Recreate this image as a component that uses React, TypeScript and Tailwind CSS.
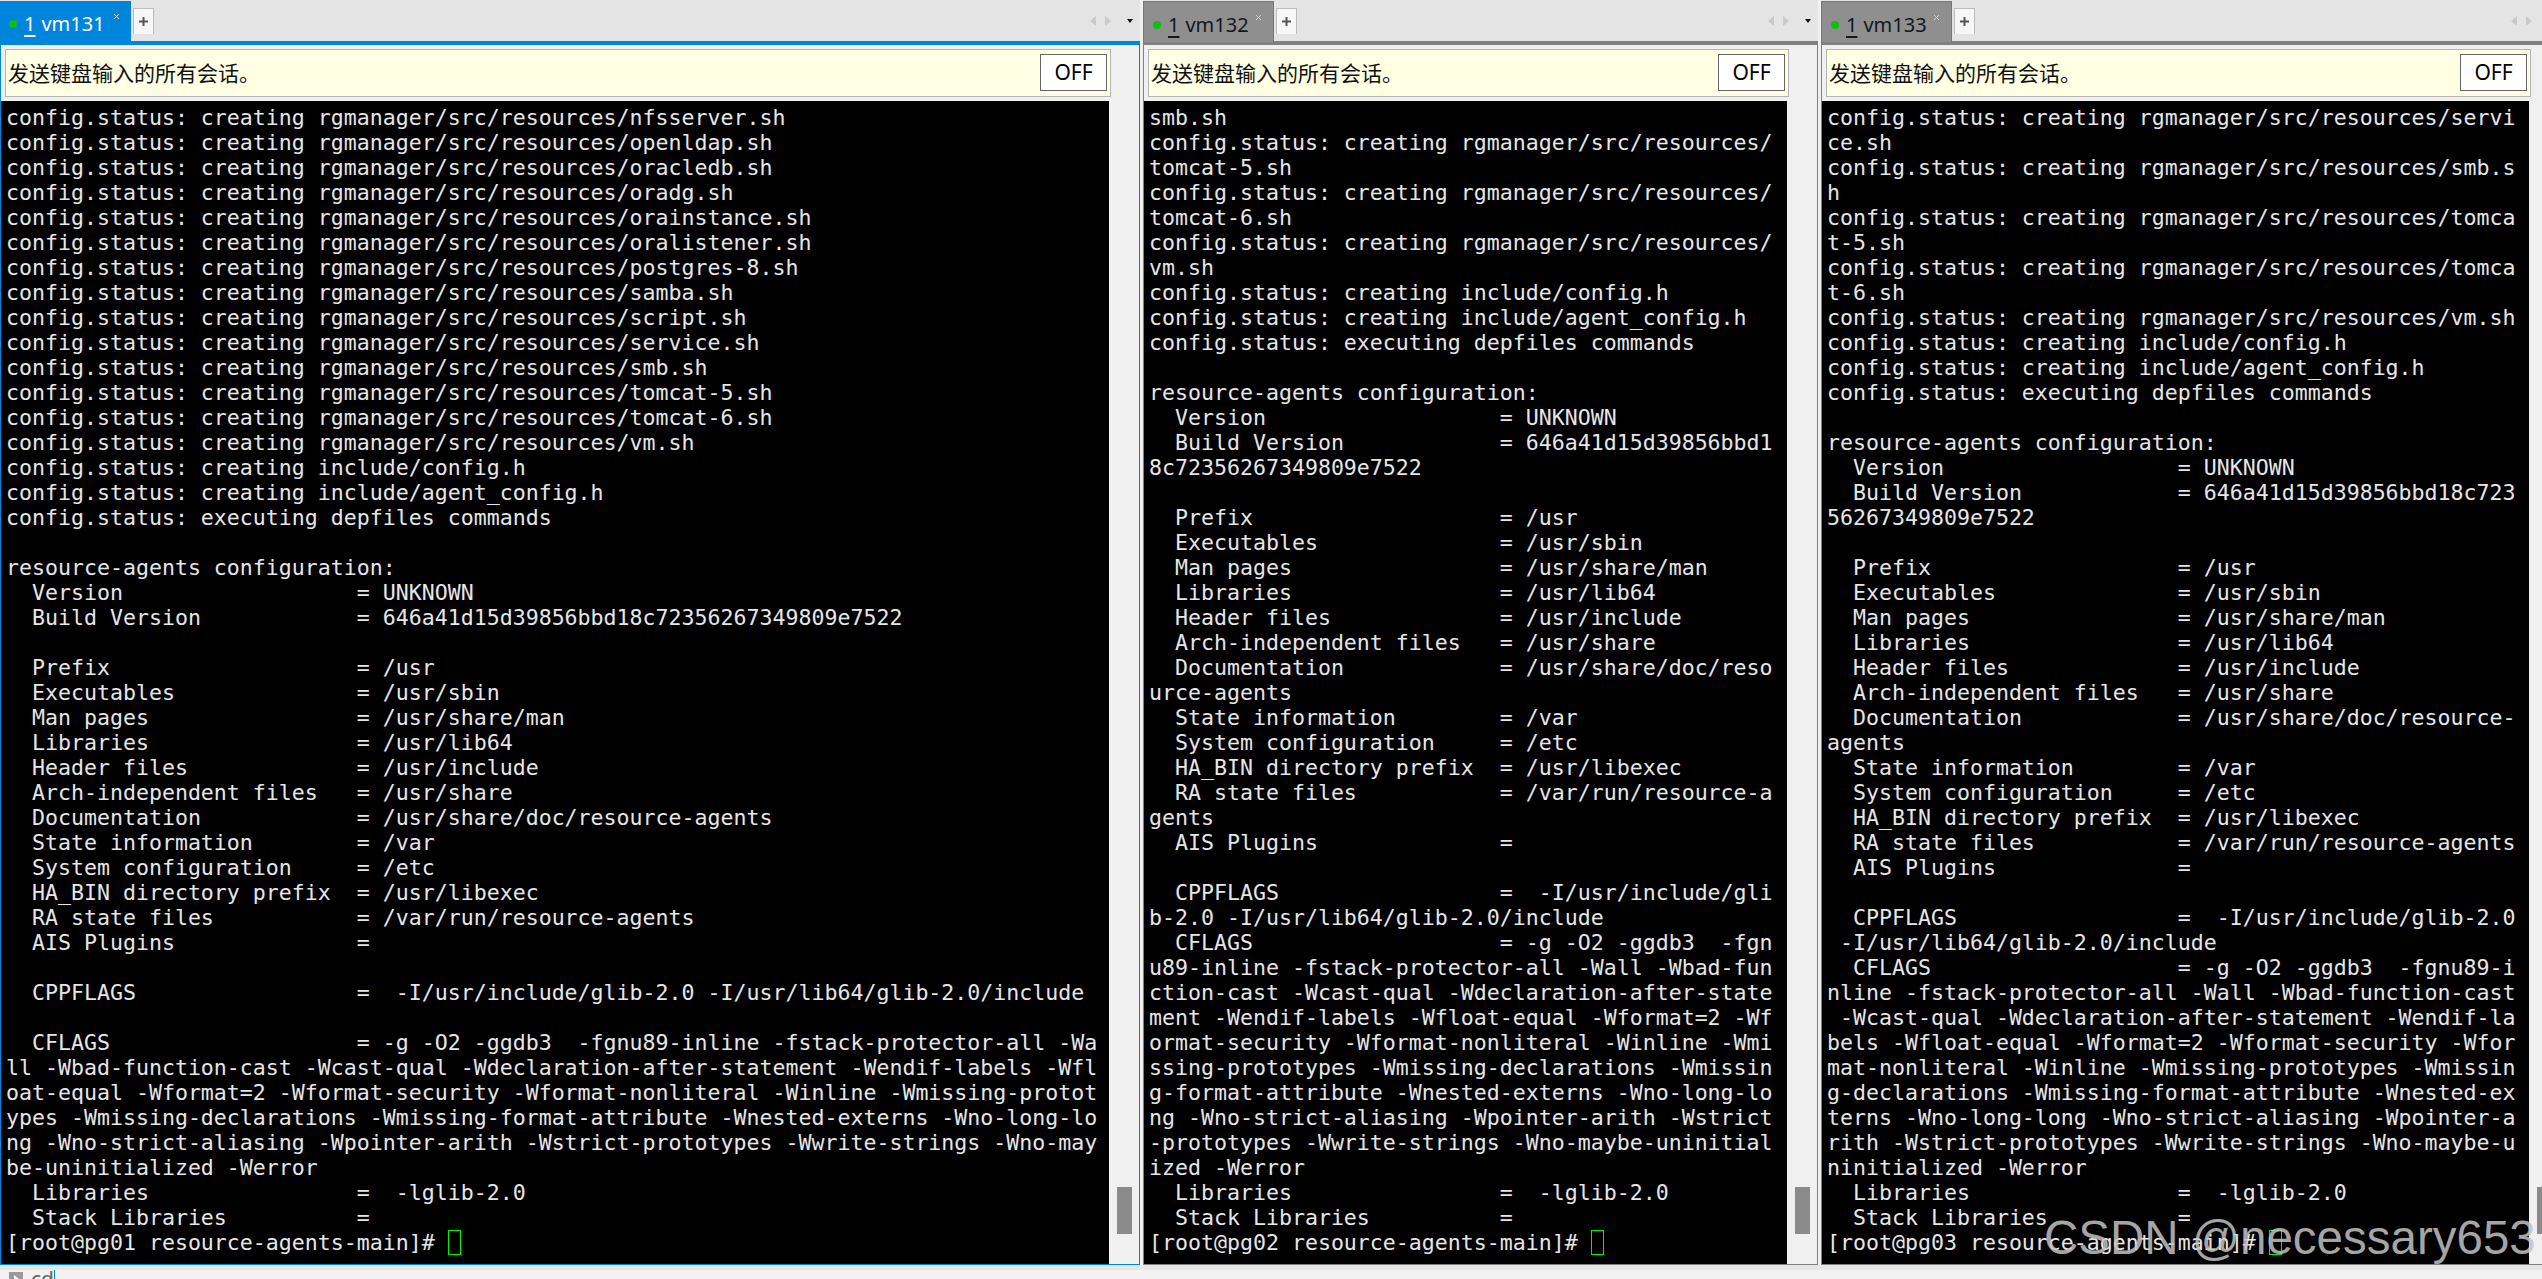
const res = (f: string) => `config.status: creating rgmanager/src/resources/${f}`
const kv = (k: string, v: string) => `  ${k}`.padEnd(27) + `= ${v}`

const CFLAGS =
  '-g -O2 -ggdb3  -fgnu89-inline -fstack-protector-all -Wall -Wbad-function-cast -Wcast-qual ' +
  '-Wdeclaration-after-statement -Wendif-labels -Wfloat-equal -Wformat=2 -Wformat-security ' +
  '-Wformat-nonliteral -Winline -Wmissing-prototypes -Wmissing-declarations ' +
  '-Wmissing-format-attribute -Wnested-externs -Wno-long-long -Wno-strict-aliasing ' +
  '-Wpointer-arith -Wstrict-prototypes -Wwrite-strings -Wno-maybe-uninitialized -Werror'

const LOG = [
  res('nfsserver.sh'), res('openldap.sh'), res('oracledb.sh'), res('oradg.sh'),
  res('orainstance.sh'), res('oralistener.sh'), res('postgres-8.sh'), res('samba.sh'),
  res('script.sh'), res('service.sh'), res('smb.sh'), res('tomcat-5.sh'),
  res('tomcat-6.sh'), res('vm.sh'),
  'config.status: creating include/config.h',
  'config.status: creating include/agent_config.h',
  'config.status: executing depfiles commands',
  '',
  'resource-agents configuration:',
  kv('Version', 'UNKNOWN'),
  kv('Build Version', '646a41d15d39856bbd18c72356267349809e7522'),
  '',
  kv('Prefix', '/usr'),
  kv('Executables', '/usr/sbin'),
  kv('Man pages', '/usr/share/man'),
  kv('Libraries', '/usr/lib64'),
  kv('Header files', '/usr/include'),
  kv('Arch-independent files', '/usr/share'),
  kv('Documentation', '/usr/share/doc/resource-agents'),
  kv('State information', '/var'),
  kv('System configuration', '/etc'),
  kv('HA_BIN directory prefix', '/usr/libexec'),
  kv('RA state files', '/var/run/resource-agents'),
  kv('AIS Plugins', ''),
  '',
  // trailing spaces are what push the blank row in the 84 column pane
  kv('CPPFLAGS', ' -I/usr/include/glib-2.0 -I/usr/lib64/glib-2.0/include  '),
  kv('CFLAGS', CFLAGS),
  kv('Libraries', ' -lglib-2.0'),
  kv('Stack Libraries', ''),
]

// hard wrap like the terminal does, then keep what fits on screen
function rows(cols: number) {
  const out: string[] = []
  for (const line of LOG) {
    if (!line) out.push('')
    for (let i = 0; i < line.length; i += cols) out.push(line.slice(i, i + cols))
  }
  return out.slice(-45)
}

function Arrow({ dir, color }: { dir: 'l' | 'r'; color: string }) {
  return (
    <svg width="6" height="10" viewBox="0 0 6 10" className="flex-none">
      <path d={dir === 'l' ? 'M6 0V10L0 5Z' : 'M0 0V10L6 5Z'} fill={color} />
    </svg>
  )
}

function Tab({ num, name, active }: { num: string; name: string; active: boolean }) {
  return (
    <div
      className={clsx(
        'relative flex h-[41px] w-[131px] flex-none items-center pl-[9px] pt-[5px] text-[20px] leading-none',
        active ? 'bg-[#0085dc] text-white' : 'border border-b-0 border-[#777] bg-[#8f8f8f] text-[#101820]',
      )}
    >
      <span className="mr-[7px] h-[8px] w-[8px] flex-none rounded-full bg-[#0cc00c]" />
      <span className="underline underline-offset-[4px]">{num}</span>
      <span className="ml-[6px]">{name}</span>
      <svg width="7" height="7" viewBox="0 0 7 7" className="absolute right-[11px] top-[12px]">
        <path d="M1 1L6 6M6 1L1 6" stroke={active ? '#cfe6f7' : '#d0d0d0'} strokeWidth="1" />
      </svg>
    </div>
  )
}

function Pane(props: {
  name: string
  active?: boolean
  host: string
  cols: number
  termW: string
  noticeW: string
  trackW: string
}) {
  const { name, active = false, host, cols, termW, noticeW, trackW } = props
  return (
    <div className="flex h-[1265px] flex-none flex-col">
      <div className="flex h-[41px] flex-none items-start bg-[#e4e4e4]">
        <div className="pt-px">
          <Tab num="1" name={name} active={active} />
        </div>
        <div className="ml-[2px] mt-[8px] flex h-[26px] w-[21px] items-center justify-center border border-b-0 border-[#bdbdbd] bg-[#f7f7f7]">
          <svg width="9" height="9" viewBox="0 0 9 9">
            <path d="M4.5 0V9M0 4.5H9" stroke="#555" strokeWidth="2" />
          </svg>
        </div>
        <div className="ml-auto mt-[16px] flex items-center pr-[7px]">
          <Arrow dir="l" color="#c9c9c9" />
          <span className="w-[9px]" />
          <Arrow dir="r" color="#c9c9c9" />
          <span className="w-[16px]" />
          <svg width="6" height="4" viewBox="0 0 6 4">
            <path d="M0 0H6L3 4Z" fill="#111" />
          </svg>
        </div>
      </div>

      <div className={clsx('h-[4px] flex-none', active ? 'bg-[#0085dc]' : 'bg-[#808080]')} />

      <div className={clsx('flex flex-1 flex-col border-x border-b bg-[#f0f0f0] pt-[4px]', active ? 'border-[#0085dc]' : 'border-[#808080]')}>
        <div className={clsx('ml-[4px] flex h-[48px] flex-none items-center justify-between border border-[#b4b4b4] bg-[#ffffe3] pl-[2px] pr-[3px]', noticeW)}>
          <span className="text-[21px] text-[#111]" style={{ fontFamily: '"Noto Sans CJK SC", sans-serif' }}>
            发送键盘输入的所有会话。
          </span>
          <span className="mb-px flex h-[37px] w-[67px] items-center justify-center border border-[#666] bg-white text-[21px] text-black">
            OFF
          </span>
        </div>

        <div className="mt-[4px] flex flex-1">
          <div className={clsx('bg-black pl-[5px] pt-[4px] text-[21.59px] leading-[25px] text-[#e6e6e6]', termW)} style={{ fontFamily: '"DejaVu Sans Mono", monospace' }}>
            {rows(cols).map((r, i) => (
              <div key={i} className="h-[25px] whitespace-pre">{r}</div>
            ))}
            <div className="flex h-[25px] whitespace-pre">
              {`[root@${host} resource-agents-main]# `}
              <span className="h-[25px] w-[13px] border border-[#00f000]" />
            </div>
          </div>
          <div className={clsx('flex flex-col justify-end pb-[30px] pl-[8px]', trackW)}>
            <div className="h-[47px] w-[15px] bg-[#8a8a8a]" />
          </div>
        </div>
      </div>
    </div>
  )
}

export default function App() {
  return (
    <div className="relative h-screen w-screen overflow-hidden bg-[#f0f0f0]" style={{ fontFamily: '"Noto Sans", sans-serif' }}>
      <div className="flex gap-[3px]">
        <Pane name="vm131" active host="pg01" cols={84} termW="w-[1108px]" noticeW="w-[1106px]" trackW="w-[30px]" />
        <Pane name="vm132" host="pg02" cols={48} termW="w-[643px]" noticeW="w-[641px]" trackW="w-[30px]" />
        <Pane name="vm133" host="pg03" cols={53} termW="w-[707px]" noticeW="w-[705px]" trackW="w-[31px]" />
      </div>

      <div className="h-[5px] bg-[#e6e6e6]" />

      {/* command bar, cut off by the bottom of the window */}
      <div className="flex h-[9px] items-start overflow-hidden bg-[#f2f2f2] pl-[9px]">
        <span className="mt-[2px] flex h-[14px] w-[14px] items-center justify-center bg-[#9a9a9a]">
          <svg width="5" height="8" viewBox="0 0 5 8"><path d="M0 0L5 4L0 8Z" fill="#fff" /></svg>
        </span>
        <span className="-mt-[5px] ml-[8px] border-r border-[#0085dc] text-[21px] leading-[28px] text-[#666]">cd</span>
      </div>

      <span
        className="absolute left-[2044px] top-[1214px] whitespace-nowrap text-[47.5px] leading-[48px] text-[#c4c4c4]/85"
        style={{ fontFamily: '"Liberation Sans", Arial, sans-serif' }}
      >
        CSDN @necessary653
      </span>
    </div>
  )
}

function clsx(...parts: string[]) {
  return parts.join(' ')
}
